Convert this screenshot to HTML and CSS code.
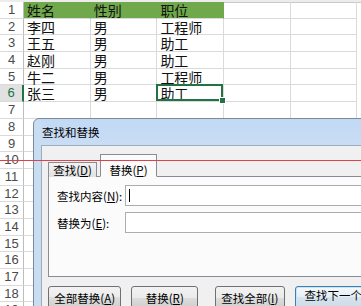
FILE: index.html
```html
<!DOCTYPE html>
<html lang="zh">
<head>
  <meta charset="UTF-8" />
  <title>查找和替换</title>
  <link rel="stylesheet" href="styles.css">
</head>
<body>
  <div class="screen">
    <div class="colhead"></div>
    <div class="sheet">
      <div class="rh">1</div><div class="c hd">姓名</div><div class="c hd">性别</div><div class="c hd">职位</div><div class="c"></div><div class="c"></div>
      <div class="rh">2</div><div class="c">李四</div><div class="c">男</div><div class="c">工程师</div><div class="c"></div><div class="c"></div>
      <div class="rh">3</div><div class="c">王五</div><div class="c">男</div><div class="c">助工</div><div class="c"></div><div class="c"></div>
      <div class="rh">4</div><div class="c">赵刚</div><div class="c">男</div><div class="c">助工</div><div class="c"></div><div class="c"></div>
      <div class="rh">5</div><div class="c">牛二</div><div class="c">男</div><div class="c">工程师</div><div class="c"></div><div class="c"></div>
      <div class="rh sel">6</div><div class="c">张三</div><div class="c">男</div><div class="c active">助工</div><div class="c"></div><div class="c"></div>
      <div class="rh">7</div><div class="c"></div><div class="c"></div><div class="c"></div><div class="c"></div><div class="c"></div>
      <div class="rh">8</div><div class="c"></div><div class="c"></div><div class="c"></div><div class="c"></div><div class="c"></div>
      <div class="rh">9</div><div class="c"></div><div class="c"></div><div class="c"></div><div class="c"></div><div class="c"></div>
      <div class="rh">10</div><div class="c"></div><div class="c"></div><div class="c"></div><div class="c"></div><div class="c"></div>
      <div class="rh">11</div><div class="c"></div><div class="c"></div><div class="c"></div><div class="c"></div><div class="c"></div>
      <div class="rh">12</div><div class="c"></div><div class="c"></div><div class="c"></div><div class="c"></div><div class="c"></div>
      <div class="rh">13</div><div class="c"></div><div class="c"></div><div class="c"></div><div class="c"></div><div class="c"></div>
      <div class="rh">14</div><div class="c"></div><div class="c"></div><div class="c"></div><div class="c"></div><div class="c"></div>
      <div class="rh">15</div><div class="c"></div><div class="c"></div><div class="c"></div><div class="c"></div><div class="c"></div>
      <div class="rh">16</div><div class="c"></div><div class="c"></div><div class="c"></div><div class="c"></div><div class="c"></div>
      <div class="rh">17</div><div class="c"></div><div class="c"></div><div class="c"></div><div class="c"></div><div class="c"></div>
      <div class="rh">18</div><div class="c"></div><div class="c"></div><div class="c"></div><div class="c"></div><div class="c"></div>
      <div class="rh">19</div><div class="c"></div><div class="c"></div><div class="c"></div><div class="c"></div><div class="c"></div>
    </div>

    <div class="dlg">
      <div class="dlg-title">查找和替换</div>
      <div class="dlg-body">
        <div class="tabs">
          <div class="tab">查找(<u>D</u>)</div>
          <div class="tab on">替换(<u>P</u>)</div>
        </div>
        <div class="panel">
          <div class="field">
            <label>查找内容(<u>N</u>):</label>
            <div class="input"><span class="caret"></span></div>
          </div>
          <div class="field second">
            <label>替换为(<u>E</u>):</label>
            <div class="input"></div>
          </div>
        </div>
        <div class="btns">
          <button class="b1">全部替换(<u>A</u>)</button>
          <button class="b2">替换(<u>R</u>)</button>
          <button class="b3">查找全部(<u>I</u>)</button>
          <button class="b4 default">查找下一个(<u>F</u>)</button>
        </div>
      </div>
    </div>

    <div class="redline"></div>
  </div>
</body>
</html>
```

FILE: styles.css
```css
* {
  box-sizing: border-box;
}
body {
  margin: 0;
  background: #fff;
  font-family: "Noto Sans CJK SC", "Liberation Sans", sans-serif;
}
.screen {
  position: relative;
  width: 361px;
  height: 306px;
  overflow: hidden;
}
.colhead {
  height: 3px;
  background: #ececec;
  border-bottom: 1px solid #c9c9c9;
}

/* --- foglio --- */
.sheet {
  display: grid;
  grid-template-columns: 24px repeat(5, 66.7px);
  grid-auto-rows: 16.7px;
  margin-top: -1px;
}
.rh {
  font-family: "Liberation Sans", sans-serif;
  font-size: 13px;
  line-height: 16px;
  color: #4a4a4a;
  text-align: center;
  background: #fff;
  border-right: 1px solid #bdbdbd;
  border-bottom: 1px solid #dadada;
}
.rh.sel {
  background: #e1e1e1;
  color: #217346;
  border-right: 2px solid #217346;
}
.c {
  position: relative;
  font-size: 14px;
  line-height: 16px;
  padding-left: 3px;
  color: #111;
  white-space: nowrap;
  border-right: 1px solid #dadada;
  border-bottom: 1px solid #dadada;
}
.c.hd {
  background: #70a94b;
  border-right-color: #70a94b;
}
.c.active::after {
  content: "";
  position: absolute;
  left: -1px;
  top: -1px;
  right: 0;
  bottom: 0;
  border: 2px solid #217346;
}
.c.active::before {
  content: "";
  position: absolute;
  right: -3px;
  bottom: -3px;
  width: 5px;
  height: 5px;
  background: #217346;
  border: 1px solid #fff;
  z-index: 1;
}

/* --- finestra di dialogo --- */
.dlg {
  position: absolute;
  left: 33px;
  top: 118px;
  width: 345px;
  height: 200px;
  background: #c8dcf2;
  border: 1px solid #7b8a9b;
  border-radius: 6px 0 0 0;
  padding-left: 7px;
  display: flex;
  flex-direction: column;
}
.dlg-title {
  height: 26px;
  line-height: 27px;
  font-size: 11.5px;
  padding-left: 1px;
  color: #000;
  background: linear-gradient(#c2d9f4, #c9ddf4);
}
.dlg-body {
  flex: 1;
  background: #f0f0f0;
  border-left: 1px solid #9eabba;
  border-top: 1px solid #9eabba;
  padding: 8px 0 0 6px;
}
.tabs {
  display: flex;
  align-items: flex-end;
  height: 23px;
  margin-bottom: -1px;
  position: relative;
}
.tab {
  width: 49px;
  height: 15px;
  font-size: 11.5px;
  line-height: 14px;
  text-align: center;
  border: 1px solid #898c95;
  border-bottom: none;
  background: linear-gradient(#f2f2f2, #e1e1e1);
}
.tab.on {
  width: 57px;
  height: 23px;
  margin-left: 3px;
  padding-top: 8px;
  background: #fbfbfb;
  border-bottom: 1px solid #fbfbfb;
  position: relative;
  z-index: 1;
}
.panel {
  height: 101px;
  background: #fbfbfb;
  border: 1px solid #898c95;
  padding: 8px 0 0 8px;
}
.field {
  display: flex;
  align-items: center;
}
.field.second {
  margin-top: 6px;
}
.field label {
  width: 71px;
  font-size: 11.5px;
  color: #000;
}
.input {
  width: 260px;
  height: 21px;
  background: #fff;
  border: 1px solid #abadb3;
  display: flex;
  align-items: center;
}
.caret {
  width: 1px;
  height: 13px;
  margin-left: 3px;
  background: #000;
}
.btns {
  display: flex;
  margin-top: 9px;
}
.btns button {
  height: 23px;
  padding: 0;
  font-family: inherit;
  font-size: 11.5px;
  color: #000;
  border: 1px solid #707070;
  border-radius: 3px;
  background: linear-gradient(#f2f2f2, #ebebeb 50%, #dddddd 50%, #cfcfcf);
}
.b1 { width: 75px; }
.b2 { width: 68px; margin-left: 10px; }
.b3 { width: 71px; margin-left: 17px; }
.b4 { width: 84px; margin-left: 10px; text-align: left; padding-left: 9px !important; }
.btns .default {
  border-color: #3c7fb1;
  box-shadow: inset 0 0 0 1px #c4e5f6;
  background: linear-gradient(#f4f8fb, #e6eef5 50%, #d7e3ee 50%, #ccdbe8);
}

.redline {
  position: absolute;
  left: 0;
  right: 0;
  top: 160px;
  height: 1px;
  background: #e0404a;
  z-index: 5;
}
```
